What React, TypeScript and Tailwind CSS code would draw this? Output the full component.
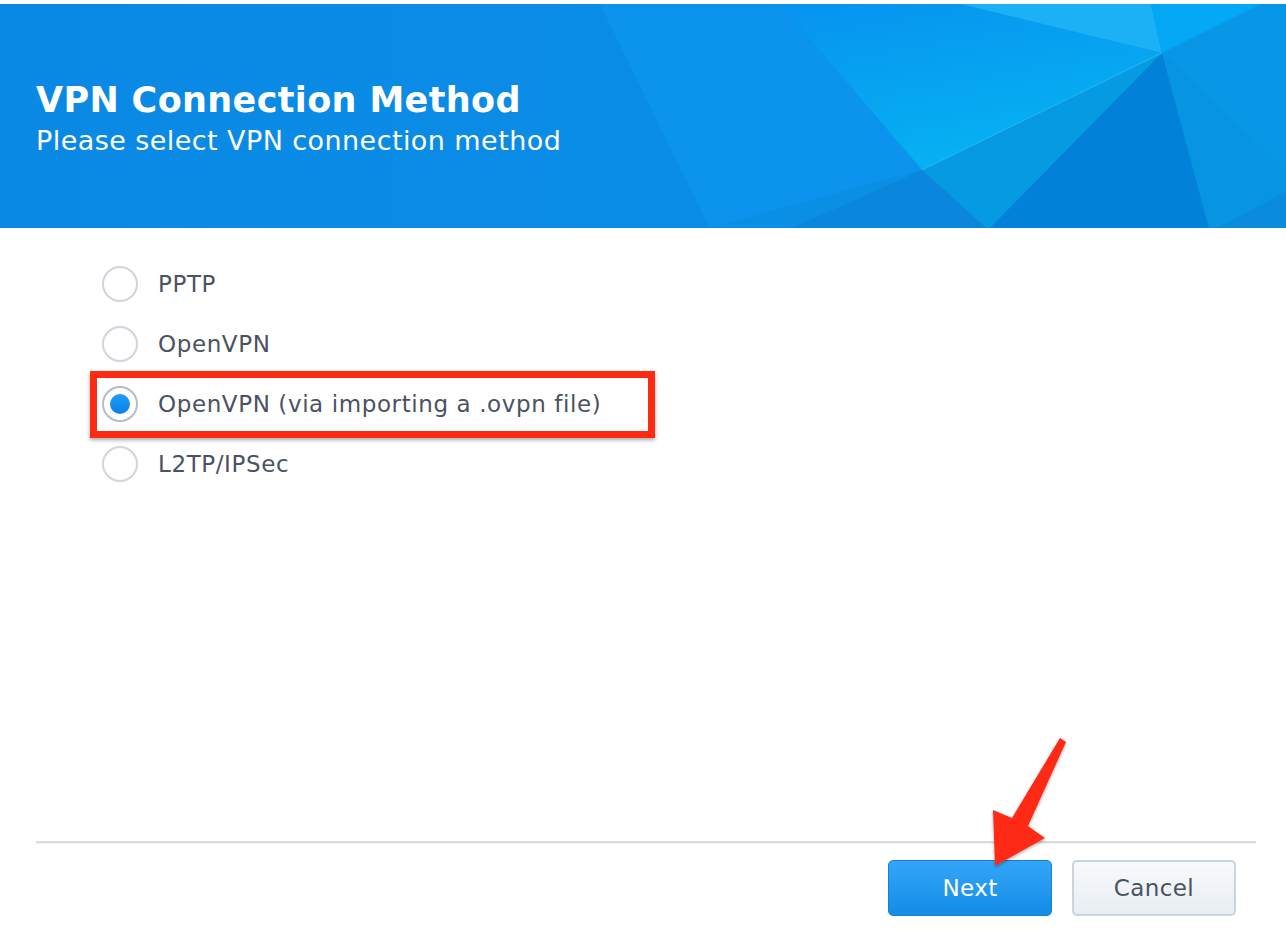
const options = ["PPTP", "OpenVPN", "OpenVPN (via importing a .ovpn file)", "L2TP/IPSec"];
const selected = 2;

function HeaderFacets() {
  // decorative low-poly facets on the right of the banner
  return (
    <svg className="absolute inset-0 h-full w-full" viewBox="0 0 1286 224" preserveAspectRatio="none">
      <defs>
        <linearGradient id="base" x1="0" y1="0" x2="1" y2="0">
          <stop offset="0" stopColor="#0a89e4" />
          <stop offset="1" stopColor="#0990ea" />
        </linearGradient>
        <linearGradient id="glow" x1="0.2" y1="0" x2="0.6" y2="1">
          <stop offset="0" stopColor="#0795f0" />
          <stop offset="1" stopColor="#06b4f2" />
        </linearGradient>
      </defs>
      <rect width="1286" height="224" fill="url(#base)" />
      <polygon points="600,0 780,0 922,166 710,224 640,82" fill="#0b93ee" />
      <polygon points="780,0 961,0 1162,49 922,166" fill="url(#glow)" />
      <polygon points="961,0 1151,0 1162,49" fill="#1cb0f4" />
      <polygon points="1151,0 1262,0 1162,49" fill="#04a8f4" />
      <polygon points="1262,0 1286,0 1286,167 1162,49" fill="#0897e6" />
      <polygon points="922,166 1162,49 990,224 986,224" fill="#069ae2" />
      <polygon points="922,166 986,224 792,224" fill="#0a86dc" />
      <polygon points="710,224 922,166 792,224" fill="#0990e4" />
      <polygon points="1162,49 1209,224 990,224" fill="#0281d8" />
      <polygon points="1162,49 1286,167 1286,188 1217,224 1209,224" fill="#0794e2" />
      <polygon points="1217,224 1286,188 1286,224" fill="#0a8bde" />
      <polyline points="922,166 1162,49" fill="none" stroke="#3cc8f8" strokeWidth="1" opacity="0.6" />
    </svg>
  );
}

function Radio({ checked }: { checked: boolean }) {
  return (
    <span
      className={`flex h-9 w-9 shrink-0 items-center justify-center rounded-full border-2 bg-white ${
        checked ? "border-[#b5bdc7]" : "border-[#cfd6de]"
      }`}
    >
      {checked && <span className="h-5 w-5 rounded-full bg-gradient-to-b from-[#1e9bf8] to-[#0a80ea]" />}
    </span>
  );
}

export default function App() {
  return (
    <div
      className="relative flex h-[930px] w-[1286px] flex-col bg-white pt-1"
      style={{ fontFamily: '"DejaVu Sans", Verdana, sans-serif' }}
    >
      {/* Banner */}
      <header className="relative h-[224px] shrink-0 overflow-hidden">
        <HeaderFacets />
        <div className="relative px-9 pt-[76px] text-white">
          <h1 className="m-0 text-[35px] font-bold leading-[40px] tracking-[0.35px]">VPN Connection Method</h1>
          <p className="m-0 mt-[4px] text-[27px] leading-[34px] tracking-[0.43px]">Please select VPN connection method</p>
        </div>
      </header>

      {/* Options */}
      <div className="flex flex-1 flex-col pl-[102px] pt-[26px]">
        {options.map((label, i) => (
          <div
            key={label}
            className="relative flex h-[60px] items-center gap-5 text-[23px] tracking-[0.6px] text-[#4a5263]"
          >
            <Radio checked={i === selected} />
            <span>{label}</span>
            {i === selected && (
              <div className="pointer-events-none absolute -left-3 -top-[3px] h-[67px] w-[565px] border-[7px] border-[#ff2a12] shadow-[0_2px_4px_rgba(0,0,0,0.35)]" />
            )}
          </div>
        ))}
      </div>

      {/* Footer */}
      <div className="ml-9 mr-[30px] h-[2px] bg-[#dcdcdc] shadow-[0_1px_1px_rgba(0,0,0,0.06)]" />
      <div className="flex justify-end gap-5 pb-[14px] pr-[50px] pt-[17px]">
        <button className="h-14 w-[164px] rounded-[5px] border border-[#1a7fd0] bg-gradient-to-b from-[#31a6f8] to-[#138ce6] text-[23px] tracking-[0.4px] text-white">
          Next
        </button>
        <button className="h-14 w-[164px] rounded-[5px] border-2 border-[#cbd4de] bg-gradient-to-b from-[#f8fafc] to-[#e8edf3] text-[23px] tracking-[0.4px] text-[#4a5263]">
          Cancel
        </button>
      </div>

      {/* Annotation arrow */}
      <svg className="pointer-events-none absolute left-0 top-0" width="1286" height="930">
        <defs>
          <filter id="sh" x="-20%" y="-20%" width="140%" height="140%">
            <feDropShadow dx="0" dy="1.5" stdDeviation="1.5" floodColor="#000" floodOpacity="0.35" />
          </filter>
        </defs>
        <polygon
          points="1060,738 1066,742 1028,826 1045,838 995,866 993,810 1012,818"
          fill="#ff2a12"
          filter="url(#sh)"
        />
      </svg>
    </div>
  );
}
